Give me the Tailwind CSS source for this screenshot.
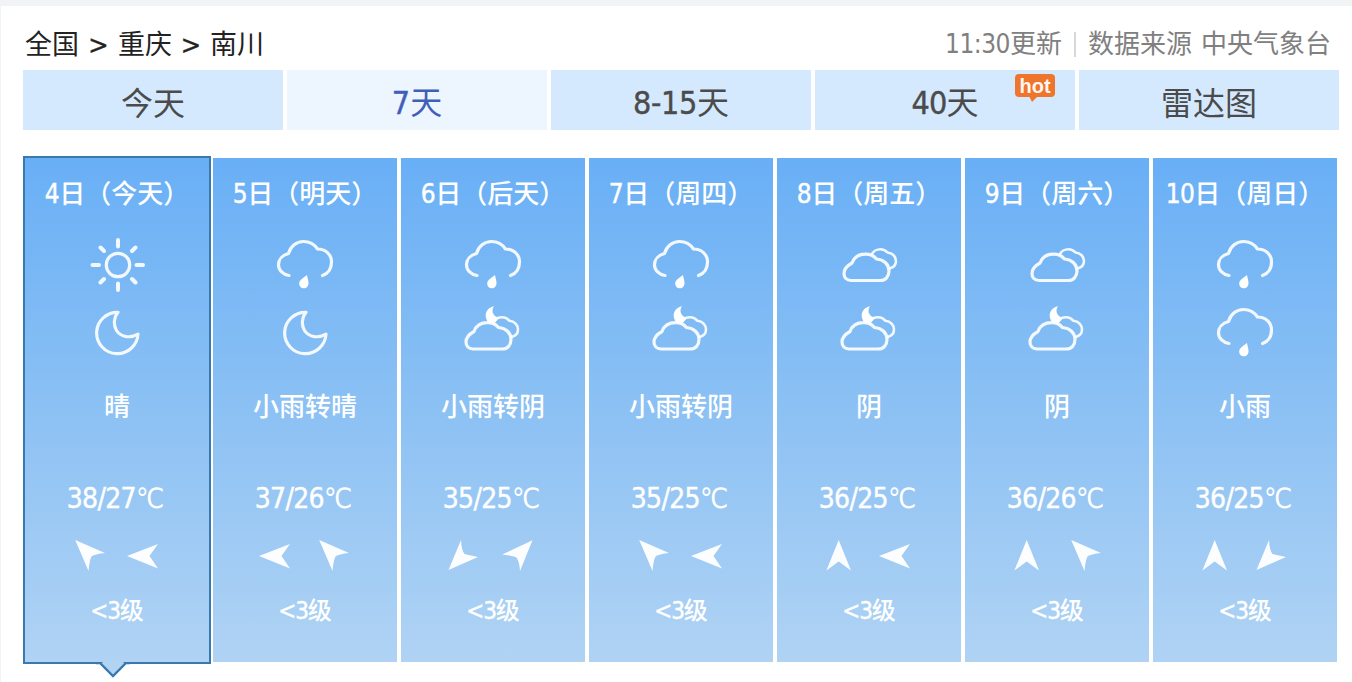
<!DOCTYPE html>
<html lang="zh-CN">
<head>
    <meta charset="UTF-8">
    <meta name="viewport" content="width=device-width, initial-scale=1.0">
    <title>南川天气预报</title>
    <script src="https://cdn.jsdelivr.net/npm/@tailwindcss/browser@4"></script>
    <style>
        body { font-family: "DejaVu Sans", "Noto Sans CJK SC", sans-serif; font-stretch: 75%; }
        .num { -webkit-text-stroke: 0.4px currentColor; }
    </style>
</head>
<body class="bg-white h-[682px] overflow-hidden border-t-6 border-l border-[#f1f3f5]">

    <!-- 图标 -->
    <svg class="hidden">
        <symbol id="sun" viewBox="0 0 60 60">
            <circle cx="31" cy="30" r="11.7"/>
            <path stroke-width="4" d="M31 5v6.500M31 48.500v6.500M5.500 30h6.500M49.500 30h6.500M13.500 12.500l3.500 3.500M45 44l3.500 3.500M48.500 12.500l-3.500 3.500M17 44l-3.500 3.500"/>
        </symbol>
        <symbol id="moon" viewBox="0 0 60 60">
            <path d="M31 9.300A20.700 20.700 0 1 0 51 31C44 35.500 34 34.500 29.500 27.500C26 22 27 14 31 9.300Z"/>
        </symbol>
        <symbol id="rain" viewBox="0 0 60 60">
            <path d="M14 40.500C7.500 39.500 3.500 35 3.500 29.800C3.500 24.500 7.500 20 13.500 18.500C15.500 11 21.500 6.500 28.500 6.500C34.500 6.500 39.500 9.500 42.500 14C50.500 14 56.500 19.500 56.500 27C56.500 33.500 53 38.500 47.500 40.500"/>
            <path fill="#fff" stroke="none" d="M32 40C32.500 43 33.500 45.500 33.500 48C33.500 51.300 31.500 53.300 28.800 53.300C26 53.300 24.200 51.300 24.200 48.500C24.200 45 28.500 43 32 40Z"/>
        </symbol>
        <symbol id="cloud" viewBox="0 0 60 60">
            <path d="M12 45.500C7.500 45.500 5 42.500 5 38.500C5 33.500 8.500 30.500 13 28C15 22.500 20 19.200 26.500 19.200C31 19.200 35 21 37.500 24C45 24.500 50 29.500 50 36C50 41.500 46.500 45.500 41 45.500Z"/>
            <path stroke-width="2.600" d="M33 19.500C34 16 38 14.200 41.500 14.200C44 14.200 46.500 15.300 48.500 17.500C53.500 18 57 21.500 57 26C57 29.500 54.500 32.500 50.500 33.500"/>
        </symbol>
        <symbol id="cloudnight" viewBox="0 0 60 60">
            <path d="M10 46C5.500 46 3 43 3 39C3 34 6.500 31 11 28.500C13 23 18 19.700 24.500 19.700C29 19.700 33 21.500 35.500 24.500C43 25 48 30 48 36.500C48 42 44.500 46 39 46Z"/>
            <path stroke-width="2.600" d="M31 18C32.500 15.500 36 14.200 39.500 14.200C42 14.200 44.500 15.500 46.500 17.800C51.500 18.300 55 22 55 26.500C55 30 52.500 33 48.500 34"/>
            <path fill="#fff" stroke="none" d="M31 3C28 7.500 29.500 13 36 15C35 17 32.500 18 31.500 21L25.500 19.500C20.500 13.500 22 5.500 31 3Z"/>
        </symbol>
        <symbol id="w" viewBox="0 0 56 32"><path d="M10 16L41 4L32.500 16L41 28.500Z"/></symbol>
        <symbol id="n" viewBox="0 0 56 32"><path d="M25.700 0L38 30.500L25.700 21.500L13.400 30.500Z"/></symbol>
        <symbol id="nw" viewBox="0 0 56 32"><path d="M14.200 0L44 13Q34 14 30.500 16.500Q28.500 20 27.500 31Z"/></symbol>
        <symbol id="sw" viewBox="0 0 56 32"><path d="M11.500 30L24 0Q24.500 10 27.500 14Q31 15 41 17Z"/></symbol>
        <symbol id="ne" viewBox="0 0 56 32"><path d="M39.500 .3L27 31Q26.500 22 23.500 17.500Q20 15.500 9.200 14.500Z"/></symbol>
    </svg>

    <div class="w-[1316px] ml-[22px] pt-[18px]">
        <header class="flex justify-between items-center h-[40px] pl-[2px] pr-2">
            <div class="flex items-center text-[27px] leading-[41px] text-[#222]">
                <span>全国</span><span class="num w-[39px] text-center">&gt;</span><span>重庆</span><span class="num w-[38px] text-center">&gt;</span><span>南川</span>
            </div>
            <div class="flex items-center text-[26px] leading-[41px] text-[#808080]">
                <span><span class="tracking-[-0.5px]">11:30</span>更新</span>
                <span class="w-[2px] h-[25px] bg-[#d8d8d8] mx-[12px]"></span>
                <span>数据来源</span><span class="ml-[9px]">中央气象台</span>
            </div>
        </header>

        <nav class="mt-[6px] grid grid-cols-5 gap-1 text-[32px] leading-[67px] text-center text-[#4b4b4b]">
            <a class="h-[60px] bg-[#d5e9fe] leading-[68px]">今天</a>
            <a class="h-[60px] bg-[#edf6ff] text-[#4060b8]"><span class="num">7</span>天</a>
            <a class="h-[60px] bg-[#d5e9fe]"><span class="num tracking-[-0.3px]">8-15</span>天</a>
            <a class="h-[60px] bg-[#d5e9fe] relative"><span class="num tracking-[-0.8px]">40</span>天
                <span class="absolute left-[200px] top-1 w-10 h-[23px] rounded-[4px] bg-[#f0752c] text-white/95 font-bold text-[20px] leading-[24px] font-['Liberation_Sans']">hot
                    <svg class="absolute left-[14px] top-[22px]" width="10" height="7"><path fill="#f0752c" d="M0 0h9L3 6z"/></svg>
                </span>
            </a>
            <a class="h-[60px] bg-[#d5e9fe] leading-[68px]">雷达图</a>
        </nav>

        <main id="forecast" class="mt-7 ml-[2px] w-[1312px] grid grid-cols-7 gap-1 text-white text-center"></main>
    </div>

<script>
    const days = [
        { date: "4", name: "今天", icons: ["sun", "moon"], text: "晴", temp: "38/27", wind: ["nw", "w"] },
        { date: "5", name: "明天", icons: ["rain", "moon"], text: "小雨转晴", temp: "37/26", wind: ["w", "nw"] },
        { date: "6", name: "后天", icons: ["rain", "cloudnight"], text: "小雨转阴", temp: "35/25", wind: ["sw", "ne"] },
        { date: "7", name: "周四", icons: ["rain", "cloudnight"], text: "小雨转阴", temp: "35/25", wind: ["nw", "w"] },
        { date: "8", name: "周五", icons: ["cloud", "cloudnight"], text: "阴", temp: "36/25", wind: ["n", "w"] },
        { date: "9", name: "周六", icons: ["cloud", "cloudnight"], text: "阴", temp: "36/26", wind: ["n", "nw"] },
        { date: "10", name: "周日", icons: ["rain", "rain"], text: "小雨", temp: "36/25", wind: ["n", "sw"] }
    ];

    const icon = name => `<svg class="w-[60px] h-[60px] fill-none stroke-white/90 stroke-[3.2px] blur-[0.5px]" stroke-linecap="round" stroke-linejoin="round"><use href="#${name}"/></svg>`;
    const arrow = name => `<svg class="w-14 h-8 fill-[#fcfdff] blur-[0.6px]"><use href="#${name}"/></svg>`;

    // 选中日期下方的小三角
    const pointer = `<svg class="absolute left-[70px] top-[504px]" width="36" height="17">
        <path fill="#b1d4f2" stroke="#3a79b0" stroke-width="2.4" d="M1 1H5L18 14L31 1H35"/>
        <path fill="#b1d4f2" d="M7 0H29L27 2H9z"/></svg>`;

    document.getElementById('forecast').innerHTML = days.map((d, i) => `
        <section class="relative h-[504px] pt-[18px] flex flex-col items-center whitespace-nowrap bg-[linear-gradient(#69aff6,#86bef4_42%,#b0d3f4)] ${i === 0 ? 'outline-2 outline-[#3a79b0]' : ''}">
            <h2 class="h-9 text-[26px] leading-9 font-medium"><span class="num tracking-[-0.6px]">${d.date}</span>日（${d.name}）</h2>
            <div class="mt-[23px] flex flex-col gap-2">${d.icons.map(icon).join('')}</div>
            <p class="mt-[26px] h-9 text-[26px] leading-9 font-medium">${d.text}</p>
            <p class="mt-14 h-9 pr-[3px] text-[28px] leading-9"><span class="num tracking-[-0.7px]">${d.temp}</span>℃</p>
            <div class="mt-[23px] flex">${d.wind.map(arrow).join('')}</div>
            <p class="mt-[21px] h-9 text-[24px] leading-9 font-medium"><span class="num tracking-[-1.2px]">&lt;3</span>级</p>
            ${i === 0 ? pointer : ''}
        </section>`).join('');
</script>
</body>
</html>
